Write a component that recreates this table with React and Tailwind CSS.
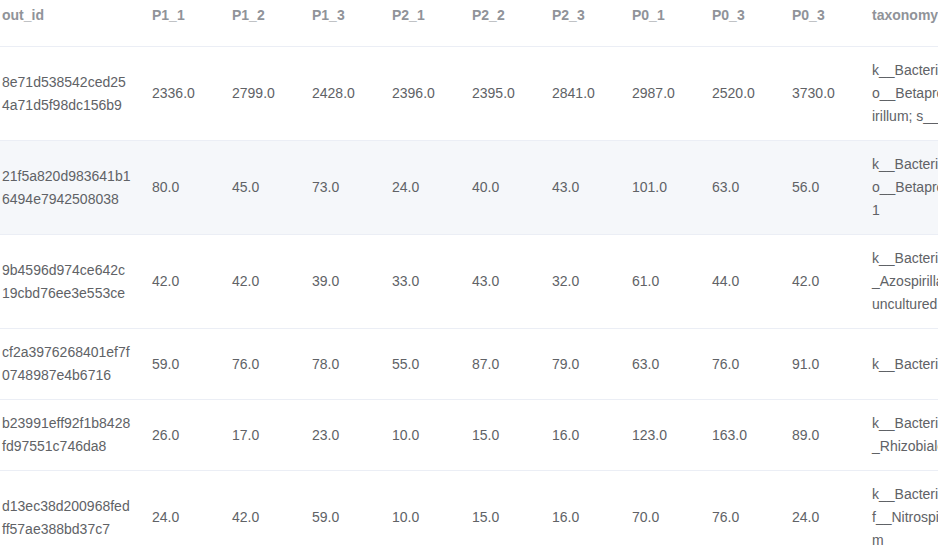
const columns = ['out_id', 'P1_1', 'P1_2', 'P1_3', 'P2_1', 'P2_2', 'P2_3', 'P0_1', 'P0_3', 'P0_3', 'taxonomy'];

const rows = [
	{
		id: ['8e71d538542ced25', '4a71d5f98dc156b9'],
		values: ['2336.0', '2799.0', '2428.0', '2396.0', '2395.0', '2841.0', '2987.0', '2520.0', '3730.0'],
		taxonomy: ['k__Bacteria; p__Proteobacteria; c__Alphaproteobacteria;', 'o__Betaproteobacteriales; f__Rhodospirillaceae; g__Azosp', 'irillum; s__uncultured bacterium'],
	},
	{
		id: ['21f5a820d983641b1', '6494e7942508038'],
		values: ['80.0', '45.0', '73.0', '24.0', '40.0', '43.0', '101.0', '63.0', '56.0'],
		taxonomy: ['k__Bacteria; p__Proteobacteria; c__Gammaproteobacteria;', 'o__Betaproteobacteriales; f__Nitrosomonadaceae; g__MND', '1'],
	},
	{
		id: ['9b4596d974ce642c', '19cbd76ee3e553ce'],
		values: ['42.0', '42.0', '39.0', '33.0', '43.0', '32.0', '61.0', '44.0', '42.0'],
		taxonomy: ['k__Bacteria; p__Proteobacteria; c__Alphaproteobacteria; o_', '_Azospirillales; f__Azospirillaceae; g__Skermanella; s__', 'uncultured bacterium'],
	},
	{
		id: ['cf2a3976268401ef7f', '0748987e4b6716'],
		values: ['59.0', '76.0', '78.0', '55.0', '87.0', '79.0', '63.0', '76.0', '91.0'],
		taxonomy: ['k__Bacteria; p__Acidobacteria; c__Acidobacteriia'],
	},
	{
		id: ['b23991eff92f1b8428', 'fd97551c746da8'],
		values: ['26.0', '17.0', '23.0', '10.0', '15.0', '16.0', '123.0', '163.0', '89.0'],
		taxonomy: ['k__Bacteria; p__Proteobacteria; c__Alphaproteobacteria; o_', '_Rhizobiales; f__Xanthobacteraceae'],
	},
	{
		id: ['d13ec38d200968fed', 'ff57ae388bd37c7'],
		values: ['24.0', '42.0', '59.0', '10.0', '15.0', '16.0', '70.0', '76.0', '24.0'],
		taxonomy: ['k__Bacteria; p__Nitrospirae; c__Nitrospira; o__Nitrospirales;', 'f__Nitrospiraceae; g__Nitrospira; s__uncultured Nitrospira s', 'm'],
	},
];

const grid = 'grid grid-cols-[150px_repeat(9,80px)_1fr]';

export default function App() {
	return (
		<div className="w-[938px] h-[550px] overflow-hidden bg-white text-[14px] leading-[23px] text-[#606266] font-['Liberation_Sans',Arial,sans-serif]">
			<div className={`${grid} h-[47px] border-b border-[#ebeef5] font-bold text-[#909399]`}>
				{columns.map((c, i) => (
					<div key={i} className="pl-[2px] pt-[4px] whitespace-nowrap overflow-hidden">{c}</div>
				))}
			</div>

			{rows.map((r, idx) => (
				<div key={idx} className={`${grid} border-b border-[#ebeef5] ${idx == 1 ? 'bg-[#f5f7fa]' : ''}`}>
					<div className="pl-[2px] py-[12px] flex flex-col justify-center whitespace-nowrap">
						{r.id.map((l, i) => <span key={i}>{l}</span>)}
					</div>
					{r.values.map((v, i) => (
						<div key={i} className="pl-[2px] py-[12px] flex items-center">{v}</div>
					))}
					<div className="pl-[2px] py-[12px] flex flex-col justify-center overflow-hidden whitespace-nowrap">
						{r.taxonomy.map((l, i) => <span key={i}>{l}</span>)}
					</div>
				</div>
			))}
		</div>
	)
}
